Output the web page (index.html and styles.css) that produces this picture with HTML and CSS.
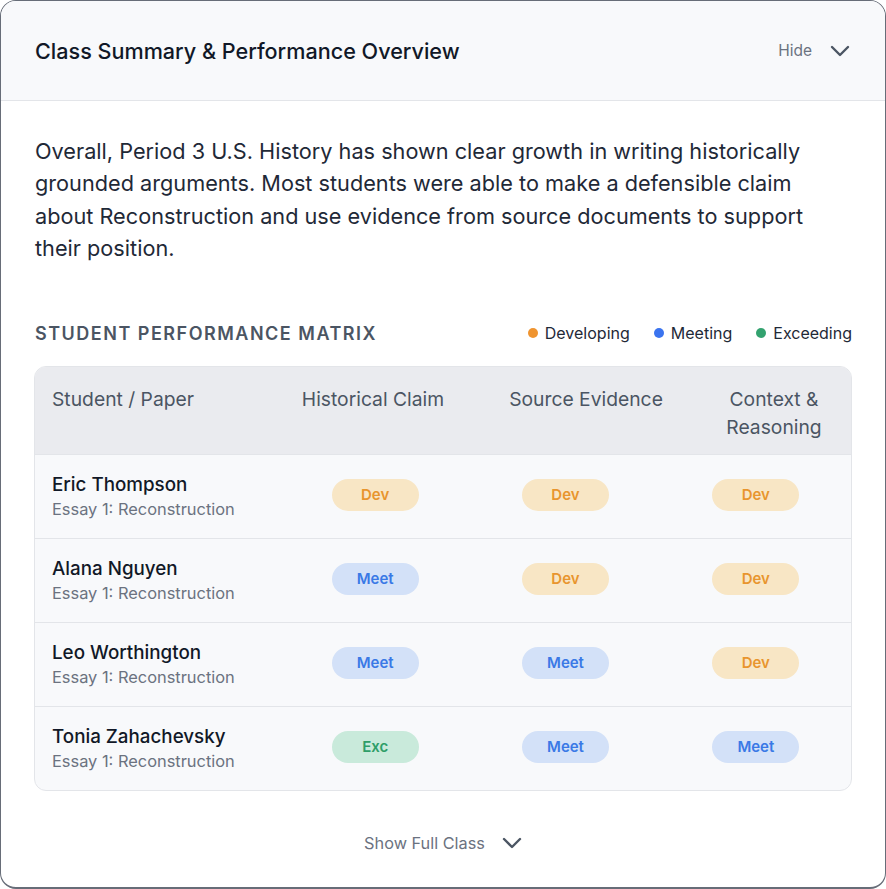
FILE: index.html
```html
<!DOCTYPE html>
<html>
<head>
    <title>Class Summary</title>
    <link rel="stylesheet" href="styles.css">
</head>
<body>
    <div class="card">
        <!-- Card header with collapse toggle -->
        <div class="card-header">
            <h2 class="card-title">Class Summary &amp; Performance Overview</h2>
            <button class="toggle" type="button">
                Hide
                <svg class="chevron" width="20" height="12" viewBox="0 0 20 12"><polyline points="2,2 10,10 18,2"/></svg>
            </button>
        </div>

        <div class="card-body">
            <p class="summary">
                Overall, Period 3 U.S. History has shown clear growth in writing historically
                grounded arguments. Most students were able to make a defensible claim
                about Reconstruction and use evidence from source documents to support
                their position.
            </p>

            <!-- Matrix title and legend -->
            <div class="matrix-head">
                <h3 class="matrix-title">STUDENT PERFORMANCE MATRIX</h3>
                <div class="legend">
                    <span class="legend-item"><i class="dot dev"></i>Developing</span>
                    <span class="legend-item"><i class="dot meet"></i>Meeting</span>
                    <span class="legend-item"><i class="dot exc"></i>Exceeding</span>
                </div>
            </div>

            <div class="matrix">
                <div class="matrix-header">
                    <div class="col-student">Student / Paper</div>
                    <div>Historical Claim</div>
                    <div>Source Evidence</div>
                    <div>Context &amp; Reasoning</div>
                </div>

                <div class="matrix-row">
                    <div class="student">
                        <div class="name">Eric Thompson</div>
                        <div class="paper">Essay 1: Reconstruction</div>
                    </div>
                    <div class="cell"><span class="pill dev">Dev</span></div>
                    <div class="cell"><span class="pill dev">Dev</span></div>
                    <div class="cell"><span class="pill dev">Dev</span></div>
                </div>

                <div class="matrix-row">
                    <div class="student">
                        <div class="name">Alana Nguyen</div>
                        <div class="paper">Essay 1: Reconstruction</div>
                    </div>
                    <div class="cell"><span class="pill meet">Meet</span></div>
                    <div class="cell"><span class="pill dev">Dev</span></div>
                    <div class="cell"><span class="pill dev">Dev</span></div>
                </div>

                <div class="matrix-row">
                    <div class="student">
                        <div class="name">Leo Worthington</div>
                        <div class="paper">Essay 1: Reconstruction</div>
                    </div>
                    <div class="cell"><span class="pill meet">Meet</span></div>
                    <div class="cell"><span class="pill meet">Meet</span></div>
                    <div class="cell"><span class="pill dev">Dev</span></div>
                </div>

                <div class="matrix-row">
                    <div class="student">
                        <div class="name">Tonia Zahachevsky</div>
                        <div class="paper">Essay 1: Reconstruction</div>
                    </div>
                    <div class="cell"><span class="pill exc">Exc</span></div>
                    <div class="cell"><span class="pill meet">Meet</span></div>
                    <div class="cell"><span class="pill meet">Meet</span></div>
                </div>
            </div>

            <!-- Expand to the whole class -->
            <div class="card-footer">
                <button class="toggle" type="button">
                    Show Full Class
                    <svg class="chevron" width="20" height="12" viewBox="0 0 20 12"><polyline points="2,2 10,10 18,2"/></svg>
                </button>
            </div>
        </div>
    </div>
</body>
</html>
```

FILE: styles.css
```css
/* Summary card layout */
* {
    box-sizing: border-box;
}

body {
    margin: 0;
    background: #fff;
    font-family: "Inter", "Noto Sans", sans-serif;
    color: #1f2937;
}

.card {
    width: 886px;
    height: 889px;
    border: 1px solid #676d78;
    border-bottom-width: 2px;
    border-radius: 16px;
    overflow: hidden;
    background: #fff;
}

.card-header {
    height: 100px;
    display: flex;
    align-items: center;
    justify-content: space-between;
    padding: 0 35px 0 34px;
    background: #f8f9fb;
    border-bottom: 1px solid #e3e5e9;
}

.card-title {
    margin: 0;
    font-size: 21.6px;
    font-weight: 500;
    color: #111827;
}

.toggle {
    display: flex;
    align-items: center;
    gap: 18px;
    padding: 0;
    border: none;
    background: none;
    font-family: inherit;
    font-size: 15.5px;
    color: #6b7280;
}

.chevron polyline {
    fill: none;
    stroke: #4b5563;
    stroke-width: 2.4;
    stroke-linecap: round;
    stroke-linejoin: round;
}

.card-body {
    padding: 34px 33px 0 33px;
}

.summary {
    max-width: 806px;
    margin: 0 0 0 1px;
    font-size: 21.7px;
    line-height: 32.4px;
    color: #1f2937;
}

/* Matrix heading and legend */
.matrix-head {
    display: flex;
    align-items: center;
    justify-content: space-between;
    margin-top: 58px;
    margin-bottom: 22px;
    padding-left: 1px;
}

.matrix-title {
    margin: 0;
    font-size: 18px;
    font-weight: 600;
    letter-spacing: 1.5px;
    color: #4b5563;
}

.legend {
    display: flex;
    gap: 24px;
    font-size: 16px;
    color: #1f2937;
}

.legend-item {
    display: flex;
    align-items: center;
    gap: 7px;
}

.dot {
    width: 10px;
    height: 10px;
    border-radius: 50%;
}

.dot.dev { background: #ef9430; }
.dot.meet { background: #3b74ef; }
.dot.exc { background: #33a26f; }

/* Matrix table */
.matrix {
    border: 1px solid #e3e5e9;
    border-radius: 12px;
    overflow: hidden;
    background: #f8f9fb;
}

.matrix-header {
    display: grid;
    grid-template-columns: 234px 174px 252px 124px;
    padding: 18px 17px 13px;
    background: #eaebef;
    font-size: 19.3px;
    line-height: 28px;
    color: #4b5563;
    text-align: center;
}

.matrix-header .col-student {
    text-align: left;
}

.matrix-row {
    display: grid;
    grid-template-columns: 245px 1fr 1fr 1fr;
    border-top: 1px solid #e3e5e9;
}

.student {
    padding: 18px 17px 17px;
}

.name {
    font-size: 18.8px;
    line-height: 24px;
    font-weight: 500;
    color: #111827;
}

.paper {
    font-size: 16.4px;
    line-height: 24px;
    color: #6b7280;
}

.cell {
    display: flex;
    align-items: center;
    justify-content: center;
    padding-bottom: 3px;
}

.pill {
    width: 87px;
    height: 32px;
    border-radius: 16px;
    display: flex;
    align-items: center;
    justify-content: center;
    font-size: 15px;
    font-weight: 600;
}

.pill.dev { background: #f8e6c5; color: #e8952e; }
.pill.meet { background: #d3e1f8; color: #3a79e6; }
.pill.exc { background: #c9eadb; color: #2f9e69; }

.card-footer {
    display: flex;
    justify-content: center;
    padding-top: 42px;
}

.card-footer .toggle {
    font-size: 16.3px;
    gap: 17px;
}
```
